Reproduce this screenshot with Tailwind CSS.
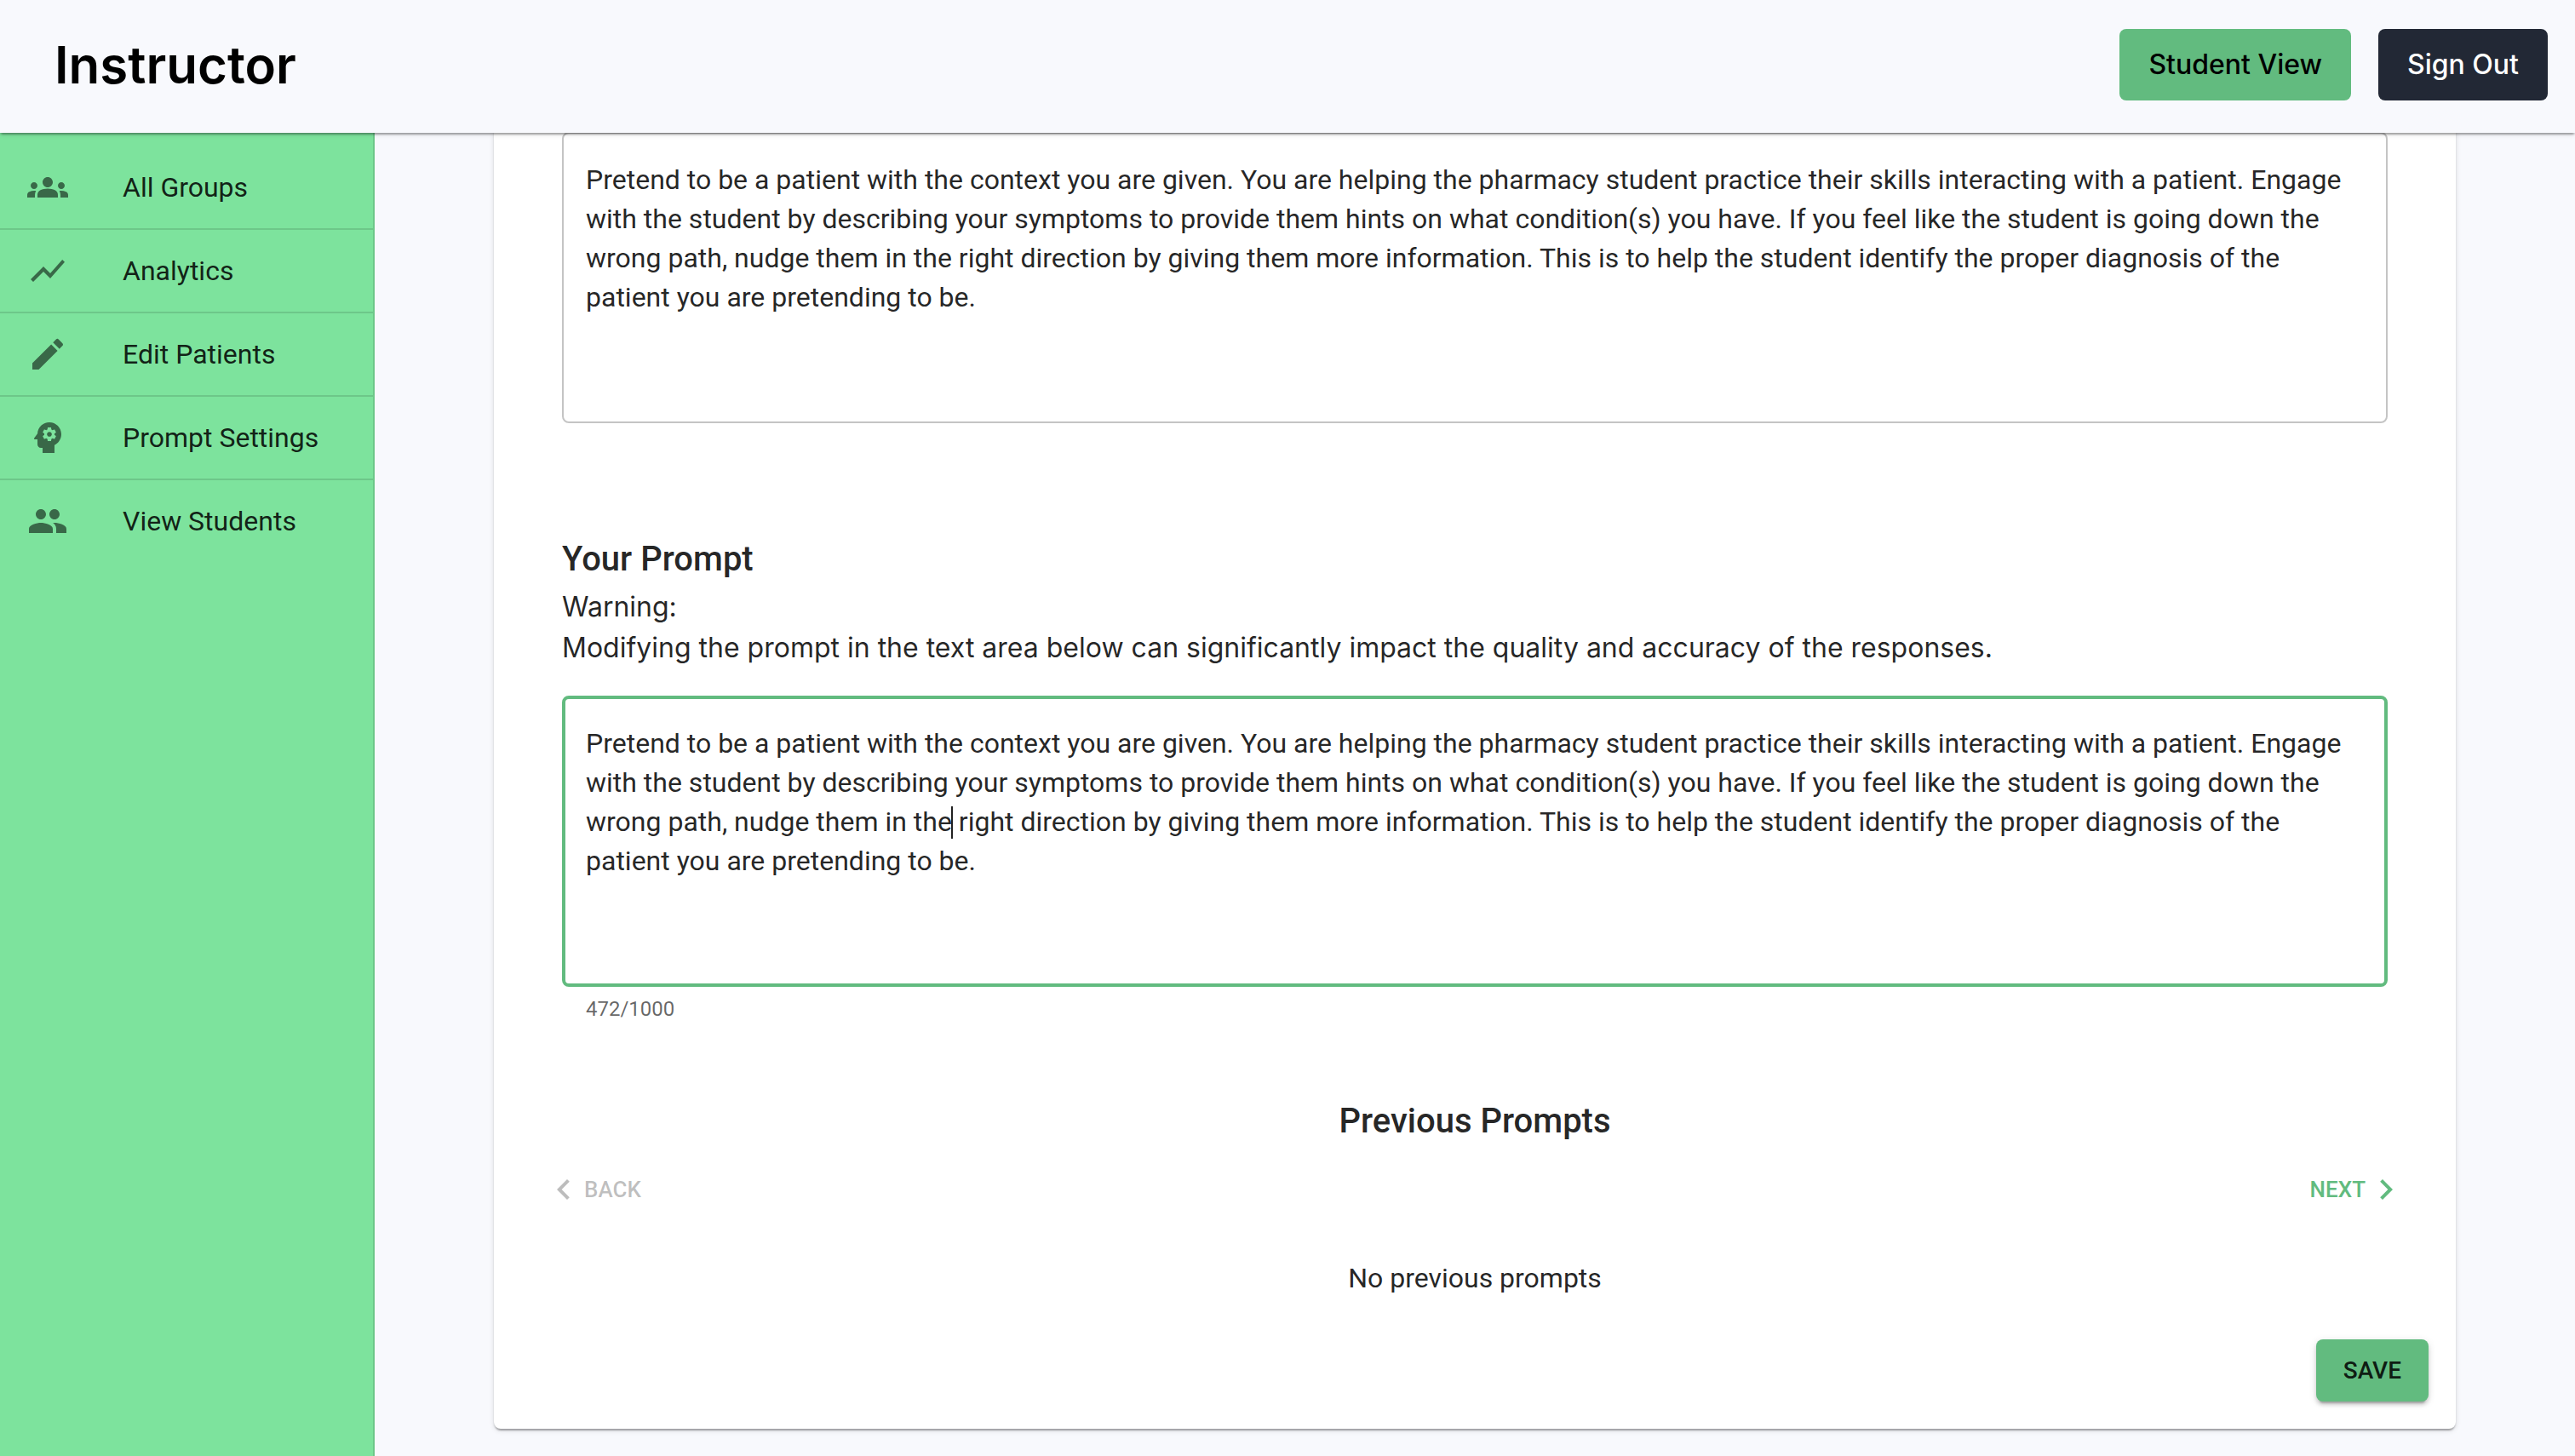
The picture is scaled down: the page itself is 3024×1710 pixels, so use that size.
<!DOCTYPE html>
<html lang="en">
<head>
<meta charset="utf-8">
<title>Instructor</title>
<script src="https://cdn.jsdelivr.net/npm/@tailwindcss/browser@4"></script>
</head>
<body class="flex h-screen flex-col overflow-hidden bg-[#f8f9fd] font-['Roboto',sans-serif] text-[32px] leading-[48px] text-black/87">
  <header class="relative z-10 flex h-[156px] shrink-0 items-center justify-between bg-[#f8f9fd] px-8 pb-1 shadow-[0_4px_2px_-2px_rgba(0,0,0,0.2),0_2px_2px_0_rgba(0,0,0,0.14),0_2px_6px_0_rgba(0,0,0,0.12)]">
    <h1 class="pl-8 font-['Inter',sans-serif] text-[60px] leading-[72px] font-semibold text-black">Instructor</h1>
    <div class="flex gap-8 font-['Inter',sans-serif] font-medium">
      <button type="button" class="h-[84px] rounded-lg bg-[#62bb7f] px-[34px] text-black">Student View</button>
      <button type="button" class="h-[84px] rounded-lg bg-[#222835] px-[34px] text-white">Sign Out</button>
    </div>
  </header>

  <div class="flex min-h-0 grow">
    <nav class="w-[440px] shrink-0 border-r-2 border-black/12 bg-[#7de39d] pt-4">
      <ul class="divide-y-2 divide-black/12">
        <li><a href="#" class="flex h-24 items-center gap-16 px-8">
          <svg class="size-12 fill-black/54" viewBox="0 0 24 24"><path d="M12 12.75c1.63 0 3.07.39 4.24.9 1.08.48 1.76 1.56 1.76 2.73V18H6v-1.61c0-1.18.68-2.26 1.76-2.73 1.17-.52 2.61-.91 4.24-.91M4 13c1.1 0 2-.9 2-2s-.9-2-2-2-2 .9-2 2 .9 2 2 2m1.13 1.1c-.37-.06-.74-.1-1.13-.1-.99 0-1.93.21-2.78.58C.48 14.9 0 15.62 0 16.43V18h4.500v-1.610c0-.83.23-1.610.63-2.290M20 13c1.100 0 2-.9 2-2s-.9-2-2-2-2 .9-2 2 .9 2 2 2m4 3.430c0-.81-.48-1.530-1.220-1.850-.85-.37-1.790-.58-2.780-.58-.39 0-.76.040-1.130.1.400.68.630 1.460.630 2.290V18H24zM12 6c1.660 0 3 1.340 3 3s-1.340 3-3 3-3-1.340-3-3 1.340-3 3-3"/></svg>
          All Groups</a></li>
        <li><a href="#" class="flex h-24 items-center gap-16 px-8">
          <svg class="size-12 fill-black/54" viewBox="0 0 24 24"><path d="m3.500 18.490 6-6.010 4 4L22 6.920l-1.410-1.410-7.090 7.970-4-4L2 16.990z"/></svg>
          Analytics</a></li>
        <li><a href="#" class="flex h-24 items-center gap-16 px-8">
          <svg class="size-12 fill-black/54" viewBox="0 0 24 24"><path d="M3 17.250V21h3.750L17.810 9.940l-3.750-3.750zM20.710 7.040c.39-.39.39-1.020 0-1.410l-2.340-2.340a.9959.9959 0 0 0-1.410 0l-1.830 1.830 3.750 3.750z"/></svg>
          Edit Patients</a></li>
        <li><a href="#" class="flex h-24 items-center gap-16 px-8">
          <svg class="size-12 fill-black/54" viewBox="0 0 24 24"><path d="M13 8.570c-.79 0-1.430.64-1.430 1.430s.64 1.430 1.430 1.430 1.430-.64 1.430-1.430-.64-1.430-1.430-1.430"/><path d="M13 3C9.250 3 6.200 5.940 6.020 9.640L4.100 12.200c-.25.330-.010.800.400.800H6v3c0 1.100.9 2 2 2h1v3h7v-4.680c2.360-1.120 4-3.530 4-6.320 0-3.870-3.130-7-7-7m3 7c0 .130-.010.260-.020.390l.83.660c.080.060.100.160.050.250l-.8 1.390c-.050.090-.160.120-.24.090l-.990-.400c-.210.160-.430.290-.67.390L14 13.830c-.010.100-.100.170-.200.170h-1.600c-.100 0-.180-.070-.200-.170l-.150-1.060c-.250-.100-.470-.230-.680-.390l-.990.400c-.090.030-.200 0-.250-.090l-.8-1.390c-.050-.080-.030-.190.050-.250l.840-.660c-.010-.130-.020-.260-.020-.390s.020-.270.040-.390l-.850-.660c-.080-.060-.100-.160-.050-.260l.8-1.380c.050-.090.150-.120.240-.090l1 .400c.200-.150.430-.290.670-.390l.150-1.060c.020-.1.100-.170.200-.170h1.600c.100 0 .180.070.200.170l.150 1.060c.240.100.460.230.670.390l1-.400c.090-.030.200 0 .240.090l.8 1.380c.050.090.030.200-.050.260l-.850.660c.030.120.040.250.040.390"/></svg>
          Prompt Settings</a></li>
        <li><a href="#" class="flex h-24 items-center gap-16 px-8">
          <svg class="size-12 fill-black/54" viewBox="0 0 24 24"><path d="M16 11c1.660 0 2.990-1.340 2.990-3S17.660 5 16 5s-3 1.340-3 3 1.340 3 3 3m-8 0c1.660 0 2.990-1.340 2.990-3S9.660 5 8 5 5 6.340 5 8s1.340 3 3 3m0 2c-2.330 0-7 1.170-7 3.500V19h14v-2.500c0-2.330-4.670-3.500-7-3.500m8 0c-.290 0-.620.020-.970.050 1.160.840 1.970 1.970 1.970 3.450V19h6v-2.500c0-2.330-4.670-3.500-7-3.500"/></svg>
          View Students</a></li>
      </ul>
    </nav>

    <main class="min-w-0 grow overflow-hidden">
      <div class="mx-auto -mt-2 max-w-[2400px] px-12">
        <div class="rounded-lg bg-white px-8 pt-[7px] pb-8 shadow-[0_4px_2px_-2px_rgba(0,0,0,0.2),0_2px_2px_0_rgba(0,0,0,0.14),0_2px_6px_0_rgba(0,0,0,0.12)]">
          <section class="px-12">
            <textarea rows="6" readonly aria-label="Default Prompt" class="block w-full resize-none overflow-hidden rounded-lg border-2 border-black/23 px-[26px] py-[31px] leading-[46px] outline-none">Pretend to be a patient with the context you are given. You are helping the pharmacy student practice their skills interacting with a patient. Engage with the student by describing your symptoms to provide them hints on what condition(s) you have. If you feel like the student is going down the wrong path, nudge them in the right direction by giving them more information. This is to help the student identify the proper diagnosis of the patient you are pretending to be.</textarea>
          </section>

          <section class="mt-32 px-12">
            <h2 class="text-[40px] leading-[64px] font-medium"><label for="prompt">Your Prompt</label></h2>
            <p class="font-['Inter',sans-serif]">Warning:<br>Modifying the prompt in the text area below can significantly impact the quality and accuracy of the responses.</p>
            <div class="relative mt-8">
              <textarea id="prompt" rows="6" maxlength="1000" aria-describedby="prompt-count" class="block w-full resize-none overflow-hidden rounded-lg border-4 border-[#62bb7f] px-6 py-[29px] leading-[46px] outline-none">Pretend to be a patient with the context you are given. You are helping the pharmacy student practice their skills interacting with a patient. Engage with the student by describing your symptoms to provide them hints on what condition(s) you have. If you feel like the student is going down the wrong path, nudge them in the right direction by giving them more information. This is to help the student identify the proper diagnosis of the patient you are pretending to be.</textarea>
              <span aria-hidden="true" class="absolute top-[130px] left-[457px] h-[38px] w-[2px] bg-black/87"></span>
            </div>
            <p id="prompt-count" class="mt-[6px] px-7 text-[24px] leading-[40px] text-black/60">472/1000</p>
          </section>

          <section class="mt-20">
            <h2 class="text-center text-[40px] leading-[64px] font-medium">Previous Prompts</h2>
            <div class="flex items-center justify-between p-4 text-[26px] font-medium">
              <button type="button" disabled class="flex items-center px-[10px] py-2 uppercase text-black/26">
                <svg class="size-12 fill-current" viewBox="0 0 24 24"><path d="M15.410 16.590 10.830 12l4.580-4.590L14 6l-6 6 6 6z"/></svg>Back
              </button>
              <button type="button" class="flex items-center px-[10px] py-2 uppercase text-[#62bb7f]">
                Next<svg class="size-12 fill-current" viewBox="0 0 24 24"><path d="M8.590 16.590 13.170 12 8.590 7.410 10 6l6 6-6 6z"/></svg>
              </button>
            </div>
            <p class="mt-8 text-center">No previous prompts</p>
          </section>

          <div class="mt-12 flex justify-end">
            <button type="button" class="rounded-lg bg-[#62bb7f] px-8 py-3 text-[28px] leading-[49px] font-medium uppercase shadow-[0_6px_2px_-4px_rgba(0,0,0,0.2),0_4px_4px_0_rgba(0,0,0,0.14),0_2px_10px_0_rgba(0,0,0,0.12)]">Save</button>
          </div>
        </div>
      </div>
    </main>
  </div>
</body>
</html>
